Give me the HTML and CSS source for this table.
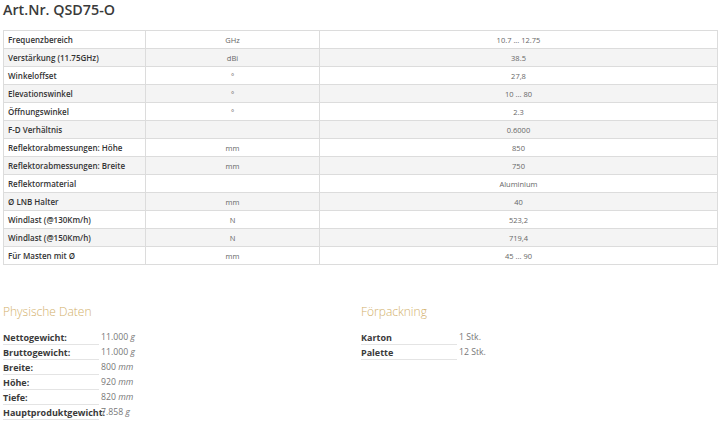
FILE: index.html
```html
<!DOCTYPE html>
<html lang="de">
<head>
<meta charset="utf-8">
<link rel="stylesheet" href="styles.css">
</head>
<body>
<h1 class="title">Art.Nr. QSD75-O</h1>
<table class="specs">
<tbody>
<tr><td class="lbl">Frequenzbereich</td><td class="unit">GHz</td><td class="val">10.7 ... 12.75</td></tr>
<tr><td class="lbl">Verstärkung (11.75GHz)</td><td class="unit">dBi</td><td class="val">38.5</td></tr>
<tr><td class="lbl">Winkeloffset</td><td class="unit">°</td><td class="val">27,8</td></tr>
<tr><td class="lbl">Elevationswinkel</td><td class="unit">°</td><td class="val">10 ... 80</td></tr>
<tr><td class="lbl">Öffnungswinkel</td><td class="unit">°</td><td class="val">2.3</td></tr>
<tr><td class="lbl">F-D Verhältnis</td><td class="unit"></td><td class="val">0.6000</td></tr>
<tr><td class="lbl">Reflektorabmessungen: Höhe</td><td class="unit">mm</td><td class="val">850</td></tr>
<tr><td class="lbl">Reflektorabmessungen: Breite</td><td class="unit">mm</td><td class="val">750</td></tr>
<tr><td class="lbl">Reflektormaterial</td><td class="unit"></td><td class="val">Aluminium</td></tr>
<tr><td class="lbl">Ø LNB Halter</td><td class="unit">mm</td><td class="val">40</td></tr>
<tr><td class="lbl">Windlast (@130Km/h)</td><td class="unit">N</td><td class="val">523,2</td></tr>
<tr><td class="lbl">Windlast (@150Km/h)</td><td class="unit">N</td><td class="val">719,4</td></tr>
<tr><td class="lbl">Für Masten mit Ø</td><td class="unit">mm</td><td class="val">45 ... 90</td></tr>
</tbody>
</table>
<div class="blocks">
  <section class="block phys">
    <h2 class="sub">Physische Daten</h2>
    <dl class="kv">
      <div class="row"><dt>Nettogewicht:</dt><dd>11.000 <i>g</i></dd></div>
      <div class="row"><dt>Bruttogewicht:</dt><dd>11.000 <i>g</i></dd></div>
      <div class="row"><dt>Breite:</dt><dd>800 <i>mm</i></dd></div>
      <div class="row"><dt>Höhe:</dt><dd>920 <i>mm</i></dd></div>
      <div class="row"><dt>Tiefe:</dt><dd>820 <i>mm</i></dd></div>
      <div class="row"><dt>Hauptproduktgewicht:</dt><dd>7.858 <i>g</i></dd></div>
    </dl>
  </section>
  <section class="block pack">
    <h2 class="sub">Förpackning</h2>
    <dl class="kv">
      <div class="row"><dt>Karton</dt><dd>1 Stk.</dd></div>
      <div class="row"><dt>Palette</dt><dd>12 Stk.</dd></div>
    </dl>
  </section>
</div>
</body>
</html>
```
FILE: styles.css
```css
* { box-sizing: border-box; }
html, body { margin: 0; padding: 0; background: #fff; }
body {
  font-family: "Open Sans", "DejaVu Sans", sans-serif;
  color: #444;
  padding: 0 2px 0 3px;
  overflow: hidden;
  height: 421px;
}
.title {
  margin: 0;
  padding-top: 1px;
  height: 30px;
  font-size: 14.3px;
  font-weight: 600;
  color: #3a3a3a;
  line-height: 18px;
}
.specs {
  width: 715px;
  border-collapse: collapse;
  table-layout: fixed;
  border: 1px solid #dcdcdc;
  font-size: 8px;
}
.specs td {
  height: 18px;
  padding: 0 4px;
  border-top: 1px solid #dcdcdc;
  border-bottom: 1px solid #dcdcdc;
  line-height: 16px;
  color: #666;
  white-space: nowrap;
}
.specs tr:nth-child(even) td { background: #f4f4f4; }
.specs td.lbl { width: 142px; font-weight: 600; color: #333; border-right: 1px solid #dcdcdc; }
.specs td.unit { width: 174px; text-align: center; border-right: 1px solid #dcdcdc; font-size: 7.5px; }
.specs td.val { text-align: center; font-size: 7.5px; }
.blocks {
  display: flex;
  margin-top: 39px;
}
.block.phys { width: 358px; }
.block.pack { width: 300px; }
.sub {
  margin: 0 0 10px;
  font-size: 12px;
  font-weight: 300;
  color: #d2b06a;
  line-height: 16px;
}
.kv { margin: 0; }
.kv .row { display: flex; height: 15px; align-items: center; }
.kv dt {
  flex: none;
  width: 96px;
  font-size: 9px;
  font-weight: 700;
  color: #3a3a3a;
  border-bottom: 1px solid #e4e4e4;
  line-height: 13px;
  white-space: nowrap;
}
.kv dd {
  margin: 0 0 0 2px;
  font-size: 8.7px;
  color: #777;
  line-height: 13px;
  white-space: nowrap;
}
.kv dd i { font-style: italic; }
```
